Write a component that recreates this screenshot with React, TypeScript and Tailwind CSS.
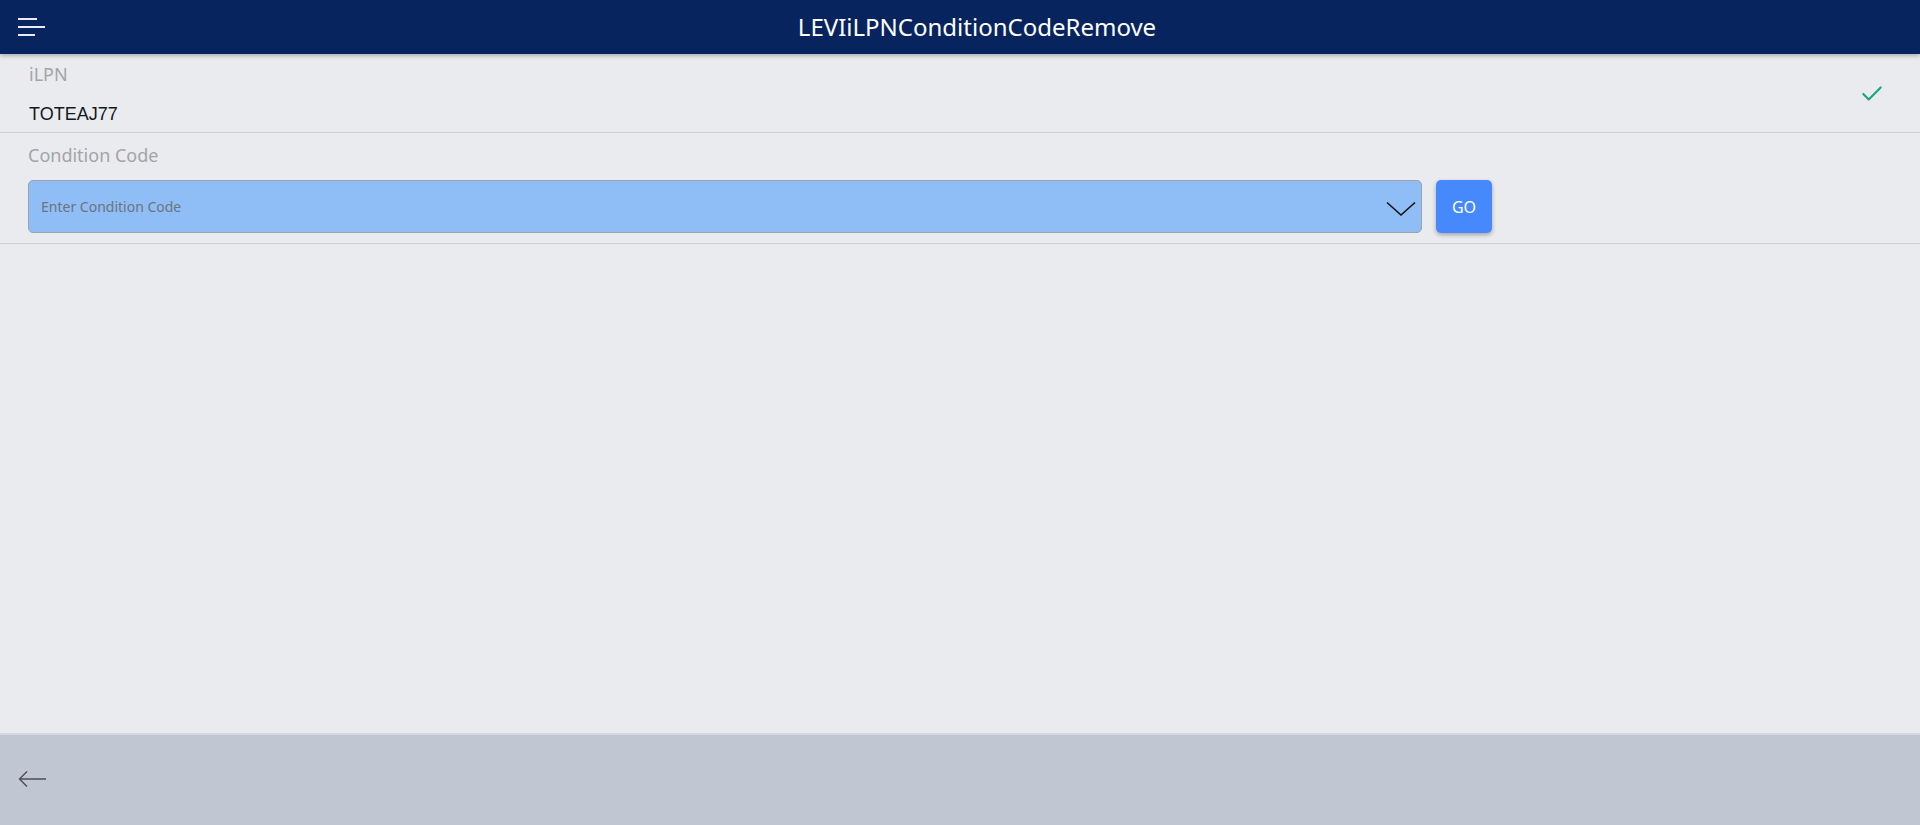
import { Check } from 'lucide-react';

export default function App() {
    return (
        <div className="flex flex-col h-[825px] w-full bg-[#eaebef] font-['Noto_Sans',sans-serif]">
            {/* Header */}
            <header className="relative z-10 flex items-center h-[54px] bg-[#07245e] shadow-[0_2px_4px_rgba(0,0,0,0.25)]">
                <button className="flex flex-col gap-[6px] pl-[18px] pr-3 py-2">
                    <span className="block w-[19px] h-[2px] bg-[#e8ecf5]" />
                    <span className="block w-[27px] h-[2px] bg-[#e8ecf5]" />
                    <span className="block w-[17px] h-[2px] bg-[#e8ecf5]" />
                </button>
                <h1 className="absolute left-1/2 -translate-x-1/2 ml-[17px] text-white text-[24px] leading-none">
                    LEVIiLPNConditionCodeRemove
                </h1>
            </header>

            {/* Content */}
            <main className="flex-1 flex flex-col">
                <div className="flex items-center justify-between border-b border-[#cfd1d6] h-[79px] pl-[29px] pr-[35px]">
                    <div className="flex flex-col pt-[2px]">
                        <span className="text-[18px] leading-[24px] text-[#a3a4a8]">iLPN</span>
                        <span className="mt-[16px] text-[18px] leading-[24px] text-[#15181f] font-['Liberation_Sans',sans-serif]">TOTEAJ77</span>
                    </div>
                    <Check className="w-[26px] h-[26px] text-[#1ba57e] mt-[2px]" strokeWidth={2} />
                </div>

                <div className="flex flex-col border-b border-[#cfd1d6] pl-[28px] pt-[10px] pb-[10px]">
                    <span className="text-[18px] leading-[24px] text-[#a3a4a8]">Condition Code</span>
                    <div className="flex items-center gap-[14px] mt-[13px]">
                        <div className="flex items-center justify-between w-[1394px] h-[53px] rounded-[5px] border border-[#9aa3ae] bg-[#8fbdf5] pl-[12px] pr-[5px]">
                            <span className="text-[14px] text-[#6c7480]">Enter Condition Code</span>
                            <svg width="30" height="16" viewBox="0 0 30 16" fill="none" className="mt-[4px]">
                                <path d="M1 1.5 L15 14 L29 1.5" stroke="#111" strokeWidth="1.6" />
                            </svg>
                        </div>
                        <button className="w-[56px] h-[53px] rounded-[5px] bg-[#4589fd] text-white text-[16px] shadow-[0_2px_4px_rgba(0,0,0,0.3)]">
                            GO
                        </button>
                    </div>
                </div>
            </main>

            {/* Footer */}
            <footer className="flex items-center h-[92px] bg-[#c0c6d2] border-t-2 border-[#d4d7de] pl-[18px]">
                <svg width="30" height="20" viewBox="0 0 30 20" fill="none" className="mb-[2px]">
                    <path d="M28 10 H2 M9 2.5 L1.5 10 L9 17.5" stroke="#4a4f58" strokeWidth="1.4" />
                </svg>
            </footer>
        </div>
    );
}
